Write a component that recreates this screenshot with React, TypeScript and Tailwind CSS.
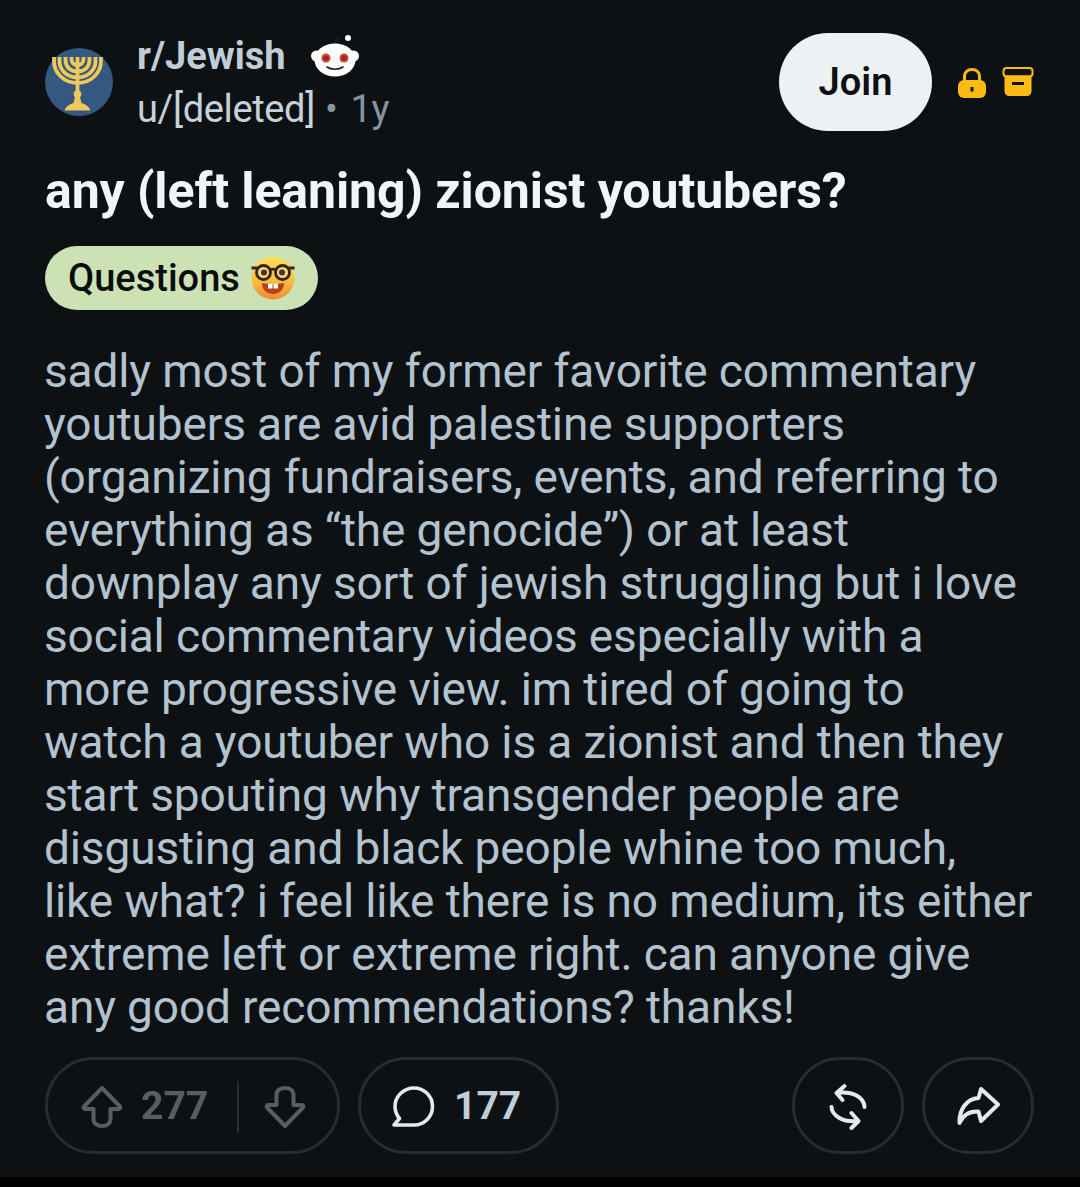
import React from "react";

const Menorah = () => (
  <svg viewBox="0 0 68 68" className="w-[68px] h-[68px] shrink-0">
    <circle cx="34" cy="34" r="34" fill="#34587f" />
    <g fill="none" stroke="#edc85a" strokeWidth="3.800">
      <path d="M32.500 9V54" />
      <path d="M26.500 9V11C26.500 15 29 17 32.500 17C36 17 38.500 15 38.500 11V9" />
      <path d="M20.500 9V12C20.500 19 25.500 23.500 32.500 23.500C39.500 23.500 44.500 19 44.500 12V9" />
      <path d="M14.500 9V13C14.500 22 22 29.500 32.500 29.500C43 29.500 50.500 22 50.500 13V9" />
      <path d="M9 9V13C9 25 19 35 32.500 35C46 35 56 25 56 13V9" />
    </g>
    <circle cx="32.500" cy="46" r="3.800" fill="#edc85a" />
    <path d="M30 49H35L36.500 55C40 56 44 58 45.500 62.500H19.500C21 58 25 56 28.500 55Z" fill="#edc85a" />
  </svg>
);

const Snoo = () => (
  <svg viewBox="0 0 50 50" className="w-[50px] h-[50px] shrink-0">
    <path d="M25 15C25 9 27 6 32 6.500" fill="none" stroke="#1c1c1c" strokeWidth="2" />
    <circle cx="38" cy="7" r="3" fill="#fff" />
    <circle cx="6.500" cy="25" r="5.500" fill="#fff" />
    <circle cx="43.500" cy="25" r="5.500" fill="#fff" />
    <ellipse cx="25" cy="29" rx="20.500" ry="16.500" fill="#fff" />
    <circle cx="16" cy="27" r="4.500" fill="#d9412b" />
    <circle cx="34" cy="27" r="4.500" fill="#d9412b" />
    <circle cx="16" cy="27" r="2.500" fill="#8a2f22" />
    <circle cx="34" cy="27" r="2.500" fill="#8a2f22" />
    <path d="M17 36C21 39 29 39 33 36" fill="none" stroke="#1c1c1c" strokeWidth="1.600" strokeLinecap="round" />
  </svg>
);

const NerdFace = () => (
  <svg viewBox="0 0 44 44" className="w-[44px] h-[44px] shrink-0">
    <defs>
      <linearGradient id="nerdFaceFill" x1="0" y1="0" x2="0" y2="1">
        <stop offset="0%" stopColor="#fde05c" />
        <stop offset="55%" stopColor="#fbbf3f" />
        <stop offset="100%" stopColor="#ef8a2c" />
      </linearGradient>
    </defs>
    <circle cx="22" cy="22" r="21.500" fill="url(#nerdFaceFill)" />
    <circle cx="12.500" cy="16.500" r="7" fill="#f3d681" stroke="#35251a" strokeWidth="2.800" />
    <circle cx="31.500" cy="16.500" r="7" fill="#f3d681" stroke="#35251a" strokeWidth="2.800" />
    <path d="M0.500 12H6M19 14C20.500 13 23.500 13 25 14M38 12H43.500" stroke="#35251a" strokeWidth="2.800" fill="none" />
    <circle cx="13" cy="16.500" r="3" fill="#4a3320" />
    <circle cx="31" cy="16.500" r="3" fill="#4a3320" />
    <path d="M11 27C17 28.500 27 28.500 33 27C33 34 28 38 22 38C16 38 11 34 11 27Z" fill="#b5411d" />
    <path d="M17 27.800H21.500V32.500H17ZM22.500 27.800H27V32.500H22.500Z" fill="#fff" />
  </svg>
);

const Lock = () => (
  <svg viewBox="0 0 30 32" className="w-[30px] h-[32px]">
    <path d="M7.500 14V9.500C7.500 5 10.500 2.500 15 2.500C19.500 2.500 22.500 5 22.500 9.500V14" fill="none" stroke="#fdbb14" strokeWidth="3" />
    <rect x="1" y="13" width="28" height="18" rx="6" fill="#fdbb14" />
    <rect x="13.500" y="20" width="3" height="4.500" fill="#15120a" />
  </svg>
);

const Archive = () => (
  <svg viewBox="0 0 32 30" className="w-[32px] h-[30px]">
    <rect x="1.500" y="1" width="29" height="8.500" rx="3" fill="#14120c" stroke="#fdbb14" strokeWidth="2" />
    <path d="M2.500 8.500H29.500V24C29.500 27 27.500 29 24.500 29H7.500C4.500 29 2.500 27 2.500 24Z" fill="#fdbb14" />
    <rect x="10" y="15" width="12" height="3" fill="#15120a" />
  </svg>
);

const Up = () => (
  <svg viewBox="0 0 42 44" className="w-[42px] h-[44px]" fill="none" stroke="#5a5d60" strokeWidth="4" strokeLinejoin="round">
    <path d="M21 3L39 21.500C39.800 22.500 39.200 24 38 24H29.500V34C29.500 38.500 26 41 21 41C16 41 12.500 38.500 12.500 34V24H4C2.800 24 2.200 22.500 3 21.500Z" />
  </svg>
);

const Down = () => (
  <svg viewBox="0 0 42 44" className="w-[42px] h-[44px]" fill="none" stroke="#5a5d60" strokeWidth="4" strokeLinejoin="round">
    <path d="M21 41L39 22.500C39.800 21.500 39.200 20 38 20H29.500V10C29.500 5.500 26 3 21 3C16 3 12.500 5.500 12.500 10V20H4C2.800 20 2.200 21.500 3 22.500Z" />
  </svg>
);

const Comment = () => (
  <svg viewBox="0 0 44 44" className="w-[44px] h-[44px]" fill="none" stroke="#e4e9ec" strokeWidth="3.600" strokeLinejoin="round">
    <path d="M23 3C33 3 41.500 11 41.500 21.500C41.500 32 33 40 23 40H3L8.500 33.500C5.500 30 4 26 4 21.500C4 11 13 3 23 3Z" />
  </svg>
);

const Repost = () => (
  <svg viewBox="0 0 38 48" className="w-[38px] h-[48px]" fill="none" stroke="#e4e9ec" strokeWidth="4" strokeLinecap="round" strokeLinejoin="round">
    <path d="M15.500 4L7.500 11L13.500 18M7.500 11C24 9 35 15 35.500 25" />
    <path d="M22.500 31L29.500 39L22.500 46M29.500 39C13 41 3 33 2.500 25" />
  </svg>
);

const Share = () => (
  <svg viewBox="0 0 44 40" className="w-[44px] h-[40px]" fill="none" stroke="#e4e9ec" strokeWidth="4" strokeLinejoin="round">
    <path d="M25 3L42 18.500L25 35L22.500 25.500C14 25 7 29 3.500 37C3 24 10 13 22.500 12Z" />
  </svg>
);

const lines = [
  "sadly most of my former favorite commentary",
  "youtubers are avid palestine supporters",
  "(organizing fundraisers, events, and referring to",
  "everything as “the genocide”) or at least",
  "downplay any sort of jewish struggling but i love",
  "social commentary videos especially with a",
  "more progressive view. im tired of going to",
  "watch a youtuber who is a zionist and then they",
  "start spouting why transgender people are",
  "disgusting and black people whine too much,",
  "like what? i feel like there is no medium, its either",
  "extreme left or extreme right. can anyone give",
  "any good recommendations? thanks!",
];

export default function App() {
  return (
    <div className="w-[1080px] h-[1187px] bg-black font-['Roboto',sans-serif] overflow-hidden">
      <div className="h-[1177px] bg-[#0e1114] pl-[45px] pr-[46px] pt-[33px] flex flex-col">
        <div className="flex items-start h-[98px]">
          <div className="mt-[15px]"><Menorah /></div>
          <div className="ml-[24px] flex flex-col">
            <div className="flex items-center h-[46px] gap-[24px]">
              <span className="text-[38px] leading-[46px] font-bold text-[#c0ced8]">r/Jewish</span>
              <Snoo />
            </div>
            <div className="flex items-center h-[52px] pt-[8px] text-[38px] leading-[52px] tracking-[-0.35px]">
              <span className="text-[#c6d2da]">u/[deleted]</span>
              <span className="text-[#8595a0] ml-[10px]">•</span>
              <span className="text-[#8595a0] ml-[13px]">1y</span>
            </div>
          </div>
          <div className="ml-auto flex items-center h-[98px]">
            <div className="w-[153px] h-[98px] rounded-full bg-[#eef1f4] flex items-center justify-center text-[38px] font-semibold text-[#0e1114]">Join</div>
            <div className="ml-[25px] mt-[2px]"><Lock /></div>
            <div className="ml-[15px]"><Archive /></div>
          </div>
        </div>
        <h1 className="mt-[30px] text-[50px] leading-[60px] font-bold text-[#f2f5f7] tracking-[-0.1px]">any (left leaning) zionist youtubers?</h1>
        <div className="mt-[25px] self-start w-[273px] h-[64px] rounded-full bg-[#cde2b4] flex items-center pl-[23px] gap-[11px]">
          <span className="text-[38px] font-medium text-[#0a0d0f] leading-[64px]">Questions</span>
          <NerdFace />
        </div>
        <div className="mt-[35px] -ml-[1px] text-[46px] leading-[53px] text-[#b2c3cf] tracking-[-0.13px]">
          {lines.map((line) => (
            <div key={line} className="whitespace-nowrap">{line}</div>
          ))}
        </div>
        <div className="mt-[23px] flex items-center h-[97px]">
          <div className="w-[295px] h-[97px] rounded-full border-[3px] border-[#282c2f] flex items-center pl-[33px] pt-[2px]">
            <Up />
            <span className="ml-[18px] text-[39px] font-bold text-[#5a5d60] w-[65px]">277</span>
            <div className="ml-[31px] w-[2px] h-[52px] bg-[#282c2f]" />
            <div className="ml-[25px]"><Down /></div>
          </div>
          <div className="ml-[18px] w-[201px] h-[97px] rounded-full border-[3px] border-[#282c2f] flex items-center pl-[30px] pt-[2px]">
            <Comment />
            <span className="ml-[19px] text-[39px] font-bold text-[#c0ced8]">177</span>
          </div>
          <div className="ml-auto w-[112px] h-[97px] rounded-full border-[3px] border-[#282c2f] flex items-center justify-center"><Repost /></div>
          <div className="ml-[18px] w-[112px] h-[97px] rounded-full border-[3px] border-[#282c2f] flex items-center justify-center"><Share /></div>
        </div>
      </div>
    </div>
  );
}
